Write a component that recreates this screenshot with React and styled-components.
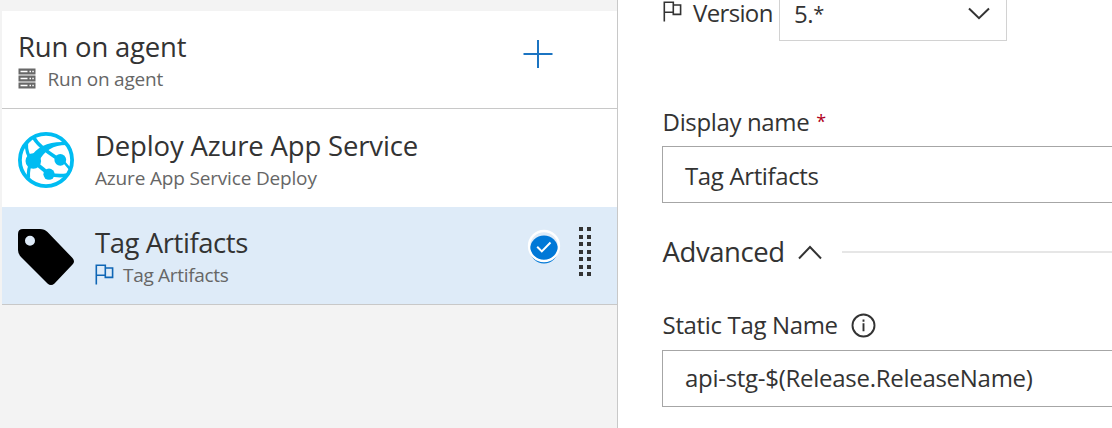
import React from "react";
import styled, { createGlobalStyle } from "styled-components";

const GlobalStyle = createGlobalStyle`
  * { box-sizing: border-box; }
  body {
    margin: 0;
    overflow: hidden;
    background: #fff;
    color: #333;
    font-family: "Open Sans", "Noto Sans", sans-serif;
  }
  svg { display: block; flex: none; }
`;

const Page = styled.div`
  display: flex;
  width: 100%;
  height: 428px;
  overflow: hidden;
`;

const Pipeline = styled.aside`
  flex: none;
  width: 618px;
  padding: 11px 0 0 2px;
  background: #f3f3f3;
  border-right: 1px solid #c8c8c8;
`;

const Row = styled.div`
  display: flex;
  height: 98px;
  padding: ${(p) => p.$top}px 25px 0 16px;
  background: ${(p) => (p.$selected ? "#deebf8" : "#fff")};
  border-bottom: ${(p) => (p.$divided ? "1px solid #c8c8c8" : "none")};
`;

const TaskIcon = styled.div`
  width: 77px;
  padding-top: 4px;
`;

const RowText = styled.div`
  flex: 1;
`;

const Title = styled.div`
  font-size: 27.5px;
  line-height: 36px;
  white-space: nowrap;
  letter-spacing: ${(p) => p.$track}px;
`;

const Subtitle = styled.div`
  display: flex;
  align-items: center;
  gap: ${(p) => p.$gap || 0}px;
  margin-top: 1px;
  color: #666;
  font-size: 19px;
  line-height: 26px;
  white-space: nowrap;
  letter-spacing: ${(p) => p.$track}px;

  svg { margin-top: -2px; }
`;

const AddButton = styled.button`
  align-self: flex-start;
  margin: 10px 39px 0 0;
  padding: 0;
  border: 0;
  background: none;
`;

const RowTools = styled.div`
  display: flex;
  align-items: flex-start;
  gap: 18px;
  margin-right: 1.5px;
`;

const Grip = styled.div`
  display: grid;
  grid-template-columns: 4px 4px;
  grid-auto-rows: 4px;
  gap: 3.5px 4px;
  margin-top: 2px;
`;

const GripDot = styled.span`
  background: #333;
`;

const StatusIcon = styled.div`
  margin-top: 2.5px;
`;

const Form = styled.main`
  flex: 1;
  min-width: 0;
  margin-top: -16px;
  padding-left: 44px;
`;

const VersionRow = styled.div`
  display: flex;
  align-items: center;
  height: 57px;
  gap: 11px;
  padding-left: 1px;

  > svg { margin-top: -2px; }
`;

const Label = styled.label`
  font-size: 24px;
  line-height: 32px;
  white-space: nowrap;
  letter-spacing: ${(p) => p.$track}px;
`;

const VersionLabel = styled(Label)`
  width: 75px;
  line-height: 24px;
`;

const Select = styled.div`
  display: flex;
  align-items: center;
  justify-content: space-between;
  width: 228px;
  height: 57px;
  padding: 2px 16px 0 14px;
  border: 1px solid #d2d2d2;
  font-size: 24px;
  line-height: 24px;

  svg { margin-top: -1px; }
`;

const SelectValue = styled.span`
  letter-spacing: -0.4px;
`;

const Asterisk = styled.span`
  position: relative;
  top: ${(p) => p.$drop}px;
  font-size: ${(p) => (p.$required ? 18 : 20)}px;
  line-height: 1;
  color: ${(p) => (p.$required ? "#b00020" : "inherit")};
`;

const LabelRow = styled.div`
  display: flex;
  align-items: center;
  gap: ${(p) => p.$gap}px;
  height: 32px;
  margin: ${(p) => p.$before}px 0 ${(p) => p.$after}px;
  padding-left: 0.6px;
`;

const Input = styled.div`
  width: 520px;
  height: 57px;
  padding: ${(p) => p.$top}px 22px 0;
  border: 1px solid #a6a6a6;
  font-size: 24px;
  line-height: 32px;
  white-space: nowrap;
  letter-spacing: ${(p) => p.$track}px;
`;

const SectionHeader = styled.div`
  display: flex;
  align-items: center;
  height: 36px;
  margin-top: 31px;
  padding-left: 0.6px;
`;

const SectionRule = styled.div`
  flex: 1;
  height: 2px;
  margin-left: 20px;
  background: #e6e6e6;
`;

const Caret = styled.svg`
  margin-left: 13px;
`;

const Flag = ({ color }) => (
  <svg width="19" height="21" viewBox="0 0 19 21" fill="none" stroke={color} strokeWidth="1.6">
    <path d="M1.3 20.5V1.2H10.3V11.2H1.3M10.3 4H17.6V13.4H10.3V11" />
  </svg>
);

const ServerIcon = () => (
  <svg width="18" height="21" viewBox="0 0 18 21">
    {[0.5, 7.5, 14.5].map((y) => (
      <g key={y}>
        <rect x="0.5" y={y} width="17" height="6" fill="#686868" />
        <path d={`M2.5 ${y + 3}H9.5M11.5 ${y + 3}H13M14.3 ${y + 3}H15.8`} stroke="#fff" strokeWidth="1.3" />
      </g>
    ))}
  </svg>
);

const PlusIcon = () => (
  <svg width="30" height="30" viewBox="0 0 30 30" stroke="#1b74c2" strokeWidth="2">
    <path d="M0.5 15H29.5M15 1V29" />
  </svg>
);

const GlobeIcon = () => (
  <svg width="56" height="56" viewBox="0 0 56 56" fill="none" stroke="#00bcf2">
    <circle cx="28" cy="28" r="26.1" strokeWidth="3.8" />
    <path d="M15.5 4.5C18 12 29 20 42 28" strokeWidth="3.8" />
    <path d="M8.5 11C8 18 10 24 14 29C11 34 10 40 10.5 46" strokeWidth="3.2" />
    <path d="M15 29L31 42" strokeWidth="3.8" />
    <path d="M31 42C38 44 43 44 49 43" strokeWidth="3.6" />
    <path d="M42 27C45 29 49 33 52 37" strokeWidth="2.6" />
    <path d="M12 26C19 14 31 9 48 10V13C36 13 26 18 20 31Z" fill="#00bcf2" stroke="none" />
    <g fill="#00bcf2" stroke="none">
      <circle cx="15.3" cy="29" r="7.8" />
      <circle cx="42.3" cy="27.8" r="5.9" />
      <circle cx="31" cy="42.2" r="5.6" />
    </g>
  </svg>
);

const TagIcon = () => (
  <svg width="56" height="56" viewBox="0 0 56 56">
    <path
      fillRule="evenodd"
      d="M5 0H22Q26.5 0 29.500 3L54.500 29Q57.500 32.500 54.500 35.500L36.500 54.500Q33 57.500 29.500 54.500L3 28Q0 25 0 21V5Q0 0 5 0ZM12 6.800A5 5 0 1 0 12 16.800A5 5 0 1 0 12 6.800Z"
    />
  </svg>
);

const CheckBadge = () => (
  <svg width="34" height="38" viewBox="0 0 34 38" fill="none">
    <circle cx="17" cy="21.5" r="14" fill="#0078d7" />
    <circle cx="17" cy="18" r="15" stroke="#fff" strokeWidth="2.3" />
    <path d="M10.2 18.800L14.8 23.400L23.500 14.500" stroke="#fff" strokeWidth="2" />
  </svg>
);

const ChevronDown = () => (
  <svg width="22" height="13" viewBox="0 0 22 13" fill="none" stroke="#333" strokeWidth="2">
    <path d="M1 1.5L11 11.2L21 1.5" />
  </svg>
);

const InfoIcon = () => (
  <svg width="25" height="25" viewBox="0 0 25 25" fill="none" stroke="#333" strokeWidth="1.9">
    <circle cx="12.5" cy="12.5" r="11" />
    <path d="M12.5 10.3V18.3M12.5 6.6V8.7" />
  </svg>
);

export default function App() {
  return (
    <>
      <GlobalStyle />
      <Page>
        <Pipeline>
          <Row $top={18} $divided>
            <RowText>
              <Title $track={-0.2}>Run on agent</Title>
              <Subtitle $track={-0.2} $gap={11.5}>
                <ServerIcon />
                Run on agent
              </Subtitle>
            </RowText>
            <AddButton aria-label="Add task">
              <PlusIcon />
            </AddButton>
          </Row>
          <Row $top={19}>
            <TaskIcon>
              <GlobeIcon />
            </TaskIcon>
            <RowText>
              <Title $track={-0.16}>Deploy Azure App Service</Title>
              <Subtitle $track={-0.17}>Azure App Service Deploy</Subtitle>
            </RowText>
          </Row>
          <Row $top={18} $selected $divided>
            <TaskIcon>
              <TagIcon />
            </TaskIcon>
            <RowText>
              <Title $track={-0.43}>Tag Artifacts</Title>
              <Subtitle $track={-0.3} $gap={9}>
                <Flag color="#0f66b5" />
                Tag Artifacts
              </Subtitle>
            </RowText>
            <RowTools>
              <StatusIcon>
                <CheckBadge />
              </StatusIcon>
              <Grip>
                {Array.from({ length: 14 }, (_, i) => (
                  <GripDot key={i} />
                ))}
              </Grip>
            </RowTools>
          </Row>
        </Pipeline>
        <Form>
          <VersionRow>
            <Flag color="#333" />
            <VersionLabel $track={-0.65}>Version</VersionLabel>
            <Select>
              <SelectValue>
                5.<Asterisk $drop={-2}>*</Asterisk>
              </SelectValue>
              <ChevronDown />
            </Select>
          </VersionRow>
          <LabelRow $before={65} $after={8} $gap={7}>
            <Label $track={-0.36}>Display name</Label>
            <Asterisk $drop={-1} $required>*</Asterisk>
          </LabelRow>
          <Input $top={13} $track={-0.36}>Tag Artifacts</Input>
          <SectionHeader>
            <Title $track={-0.43}>Advanced</Title>
            <Caret width="24" height="15" viewBox="0 0 24 15" fill="none" stroke="#333" strokeWidth="2">
              <path d="M1 13.5L12 2L23 13.5" />
            </Caret>
            <SectionRule />
          </SectionHeader>
          <LabelRow $before={39} $after={9} $gap={13}>
            <Label $track={-0.35}>Static Tag Name</Label>
            <InfoIcon />
          </LabelRow>
          <Input $top={11} $track={-0.28}>api-stg-$(Release.ReleaseName)</Input>
        </Form>
      </Page>
    </>
  );
}
